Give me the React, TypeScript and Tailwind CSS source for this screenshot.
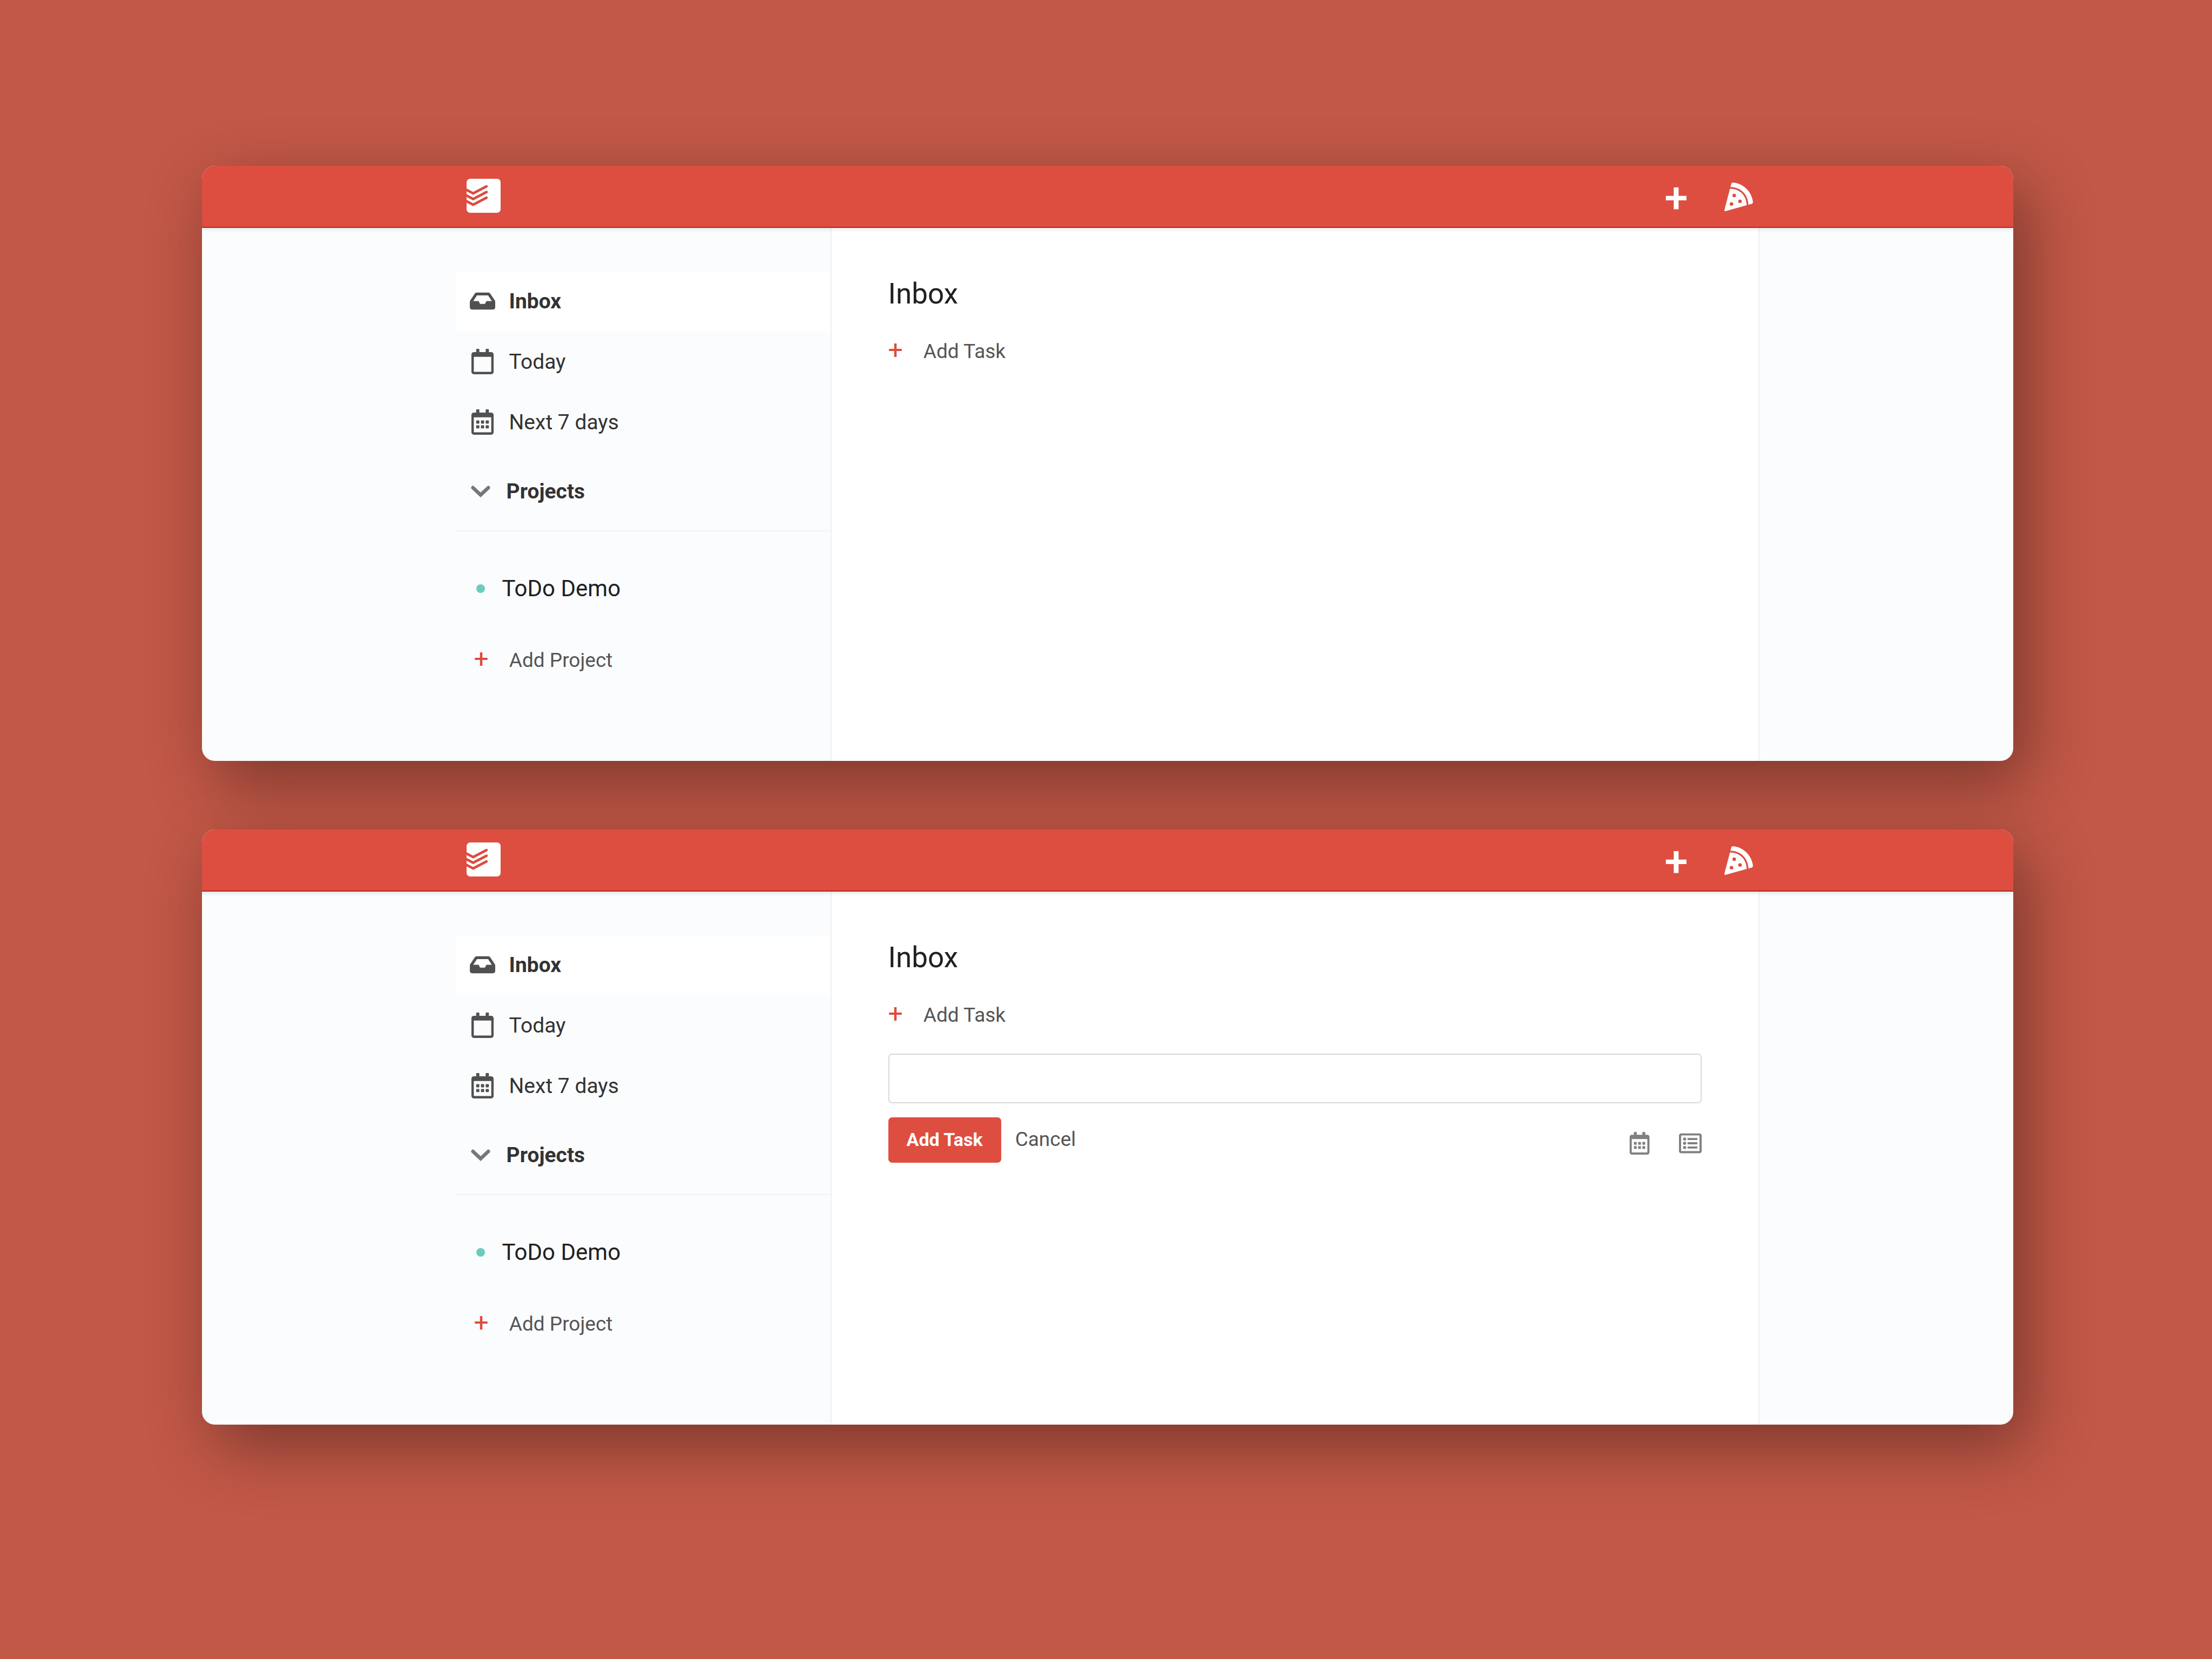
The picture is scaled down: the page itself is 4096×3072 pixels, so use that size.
import React from "react";
import {
  FaInbox,
  FaPizzaSlice,
  FaRegCalendar,
  FaRegCalendarAlt,
  FaRegListAlt,
} from "react-icons/fa";

function Logo() {
  return (
    <svg viewBox="0 0 66 66" className="size-[63px]" role="img" aria-label="Todoist">
      <defs>
        <clipPath id="logo-tile">
          <rect width="66" height="66" rx="7" />
        </clipPath>
      </defs>
      <rect width="66" height="66" rx="7" fill="#fff" />
      <g fill="none" stroke="#db4c3f" strokeWidth="5" strokeLinecap="round" clipPath="url(#logo-tile)">
        <path d="M-2 20.5 12.7 28.3 38.6 14.8" />
        <path d="M-2 31.5 12.7 39.3 38.6 25.8" />
        <path d="M-2 42.5 12.7 50.3 38.6 36.8" />
      </g>
    </svg>
  );
}

function Chevron() {
  return (
    <svg viewBox="0 0 38 24" className="h-[23px] w-[36px]" aria-hidden="true">
      <path d="M4 4.2 19 18.2 34 4.2" fill="none" stroke="#777" strokeWidth="7" strokeLinecap="round" strokeLinejoin="miter" />
    </svg>
  );
}

function Header() {
  return (
    <header className="relative z-10 border-b-2 border-[#b3271b] bg-[#dd4e41] px-[14%] shadow-[0_2px_8px_rgba(0,0,0,0.12)]">
      <div className="flex h-[113px] items-center justify-between pr-3 pb-0.5 pl-5">
        <a href="#home">
          <Logo />
        </a>
        <div className="flex items-center gap-[68px] pt-1 text-white">
          <button type="button" aria-label="Quick add task" className="pt-1 text-[78px] leading-[80px] font-medium">
            +
          </button>
          <button type="button" aria-label="Toggle dark mode">
            <FaPizzaSlice className="size-[53px]" />
          </button>
        </div>
      </div>
    </header>
  );
}

function NavItem({ icon, label, active = false }: { icon: React.ReactNode; label: string; active?: boolean }) {
  return (
    <li className={active ? "bg-white font-bold" : ""}>
      <a href="#tasks" className="flex h-[109px] items-center gap-[26px] pb-1 pl-[26px] text-[39px] leading-[48px]">
        <span className="text-[47px] text-[#505050]">{icon}</span>
        {label}
      </a>
    </li>
  );
}

function AddButton({ label }: { label: string }) {
  return (
    <button type="button" className="flex items-center gap-[38px] text-[37px] leading-[48px] text-[#555]">
      <span className="pb-[6px] text-[48px] text-[#dd4b39]">+</span>
      {label}
    </button>
  );
}

function Sidebar() {
  return (
    <nav className="w-[696px] shrink-0 border-r-2 border-[#f0f0f0] pt-[83px] text-[#333]">
      <ul className="flex flex-col gap-[3px]">
        <NavItem icon={<FaInbox />} label="Inbox" active />
        <NavItem icon={<FaRegCalendar />} label="Today" />
        <NavItem icon={<FaRegCalendarAlt />} label="Next 7 days" />
      </ul>
      <button
        type="button"
        className="mt-4 flex h-[130px] w-full items-center gap-[30px] border-b-2 border-[#f1f2f3] pb-4 pl-[28px] text-[39px] leading-[48px] font-bold"
      >
        <Chevron />
        Projects
      </button>
      <ul className="mt-[82px]">
        <li>
          <a href="#project" className="flex items-center gap-8 pl-[38px] text-[42px] leading-[48px] text-[#202020]">
            <span className="size-4 rounded-full bg-[#6accbc]" />
            ToDo Demo
          </a>
        </li>
      </ul>
      <div className="mt-[82px] pl-[34px]">
        <AddButton label="Add Project" />
      </div>
    </nav>
  );
}

function TaskForm() {
  return (
    <form className="mt-[44px]" onSubmit={(e) => e.preventDefault()}>
      <input
        type="text"
        aria-label="Task name"
        className="block h-[92px] w-full rounded-[7px] border-2 border-[#d9d9d9] bg-white px-5 text-[37px] outline-none"
      />
      <div className="mt-[26px] flex items-center justify-between">
        <div className="flex items-center gap-[26px] text-[37px] leading-[48px]">
          <button type="submit" className="h-[84px] rounded-[7px] bg-[#dd4e41] px-[34px] pb-0.5 text-[34px] font-bold text-white">
            Add Task
          </button>
          <button type="button" className="pb-0.5 text-[#555]">
            Cancel
          </button>
        </div>
        <div className="flex gap-[52px] pt-3 text-[42px] text-[#808080]">
          <button type="button" aria-label="Schedule">
            <FaRegCalendarAlt />
          </button>
          <button type="button" aria-label="Select project">
            <FaRegListAlt />
          </button>
        </div>
      </div>
    </form>
  );
}

function AppWindow({ adding = false }: { adding?: boolean }) {
  return (
    <div className="rounded-[24px] shadow-[24px_40px_120px_rgba(0,0,0,0.37)]">
      <section className="overflow-hidden rounded-[24px] bg-[#fbfcfe]">
        <Header />
        <div className="flex min-h-[987px] px-[14%]">
          <Sidebar />
          <main className="flex-1 border-r-2 border-[#f0f0f0] bg-white pt-[90px] pr-[105px] pl-[105px]">
            <h1 className="text-[53px] leading-[64px] text-[#202020]">Inbox</h1>
            <div className="mt-[48px]">
              <AddButton label="Add Task" />
            </div>
            {adding && <TaskForm />}
          </main>
        </div>
      </section>
    </div>
  );
}

export default function App() {
  return (
    <div className="flex min-h-screen flex-col gap-[127px] bg-[#c25847] pt-[307px] pr-[368px] pl-[374px] font-[Roboto,sans-serif]">
      <AppWindow />
      <AppWindow adding />
    </div>
  );
}
